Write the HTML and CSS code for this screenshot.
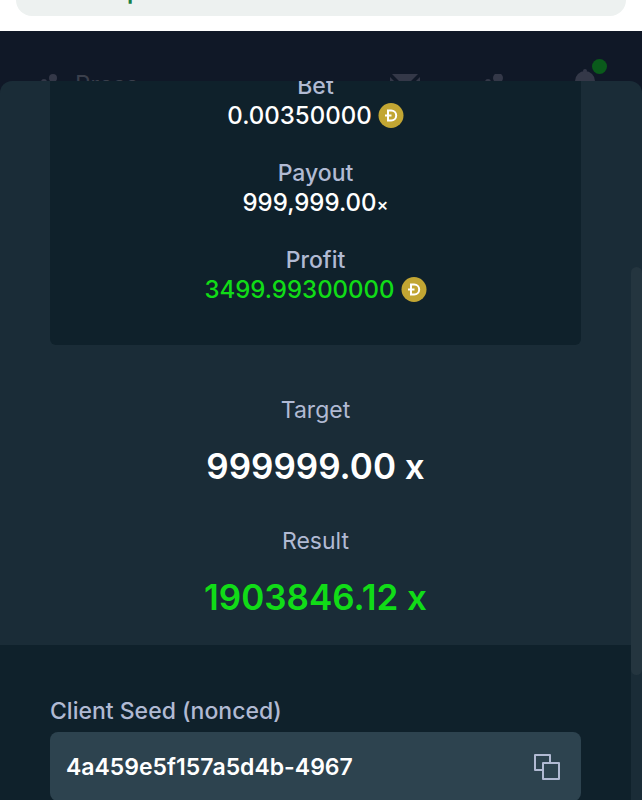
FILE: index.html
```
<!DOCTYPE html>
<html lang="en">
<head>
    <meta charset="UTF-8">
    <meta name="viewport" content="width=device-width, initial-scale=1.0">
    <title>Bet</title>
    <link rel="stylesheet" href="styles.css">
</head>
<body>
    <div class="browser-bar">
        <div class="address"><span class="address-text">p</span></div>
    </div>

    <nav class="navbar">
        <div class="nav-user">
            <svg width="26" height="22" viewBox="0 0 26 22"><circle cx="3" cy="8" r="3"/><circle cx="12" cy="4" r="4"/><path d="M3 22c0-9 4-12 9-12s9 3 9 12z"/></svg>
            <span>Press</span>
        </div>
        <div class="nav-icons">
            <svg width="30" height="22" viewBox="0 0 30 22"><path d="M2 0h26L15 13zM0 3l9 9-9 9zM30 3l-9 9 9 9z"/></svg>
            <svg width="26" height="22" viewBox="0 0 26 22"><circle cx="4" cy="8" r="3"/><circle cx="14" cy="4" r="5"/><path d="M4 22c0-9 4-12 10-12s9 3 9 12z"/></svg>
            <div class="bell">
                <svg width="22" height="26" viewBox="0 0 22 26"><circle cx="11" cy="3" r="2"/><path d="M1 20v-7a10 10 0 0 1 20 0v7z"/></svg>
                <span class="bell-dot"></span>
            </div>
        </div>
    </nav>

    <main class="modal">
        <div class="modal-content">
            <div class="panel">
                <div class="stat">
                    <h2>Bet</h2>
                    <p>0.00350000
                        <svg class="coin" viewBox="0 0 26 26"><circle cx="13" cy="12.5" r="12.5" fill="#c2a633"/><path d="M10 7.5h3.2a5 5 0 0 1 0 10H10zM7 12.5h6.5" fill="none" stroke="#fff" stroke-width="2"/></svg>
                    </p>
                </div>
                <div class="stat">
                    <h2>Payout</h2>
                    <p><span>999,999.00<span class="times">×</span></span></p>
                </div>
                <div class="stat">
                    <h2>Profit</h2>
                    <p class="win">3499.99300000
                        <svg class="coin" viewBox="0 0 26 26"><circle cx="13" cy="12.5" r="12.5" fill="#c2a633"/><path d="M10 7.5h3.2a5 5 0 0 1 0 10H10zM7 12.5h6.5" fill="none" stroke="#fff" stroke-width="2"/></svg>
                    </p>
                </div>
            </div>

            <div class="results">
                <div class="result">
                    <h3>Target</h3>
                    <p>999999.00 x</p>
                </div>
                <div class="result">
                    <h3>Result</h3>
                    <p class="win">1903846.12 x</p>
                </div>
            </div>

            <div class="seeds">
                <label for="client-seed">Client Seed (nonced)</label>
                <div class="seed-box">
                    <input id="client-seed" type="text" value="4a459e5f157a5d4b-4967" readonly>
                    <button type="button" aria-label="Copy">
                        <svg width="26" height="26" viewBox="0 0 26 26" fill="none" stroke="#b1bad3" stroke-width="2" stroke-linejoin="round"><path d="M8.5 16H1V1h15v7.5"/><rect x="9" y="9" width="16" height="16"/></svg>
                    </button>
                </div>
            </div>
        </div>
        <div class="scrollbar"><div class="thumb"></div></div>
    </main>
</body>
</html>
```

FILE: styles.css
```
:root {
    --nav: #101827;
    --modal: #1a2c37;
    --panel: #0f212b;
    --field: #2d434f;
    --label: #b1bad3;
    --win: #11dc17;
}

* {
    box-sizing: border-box;
    margin: 0;
    padding: 0;
    font-family: Inter, "Liberation Sans", sans-serif;
}

body {
    height: 100vh;
    display: flex;
    flex-direction: column;
    overflow: hidden;
    background-color: var(--nav);
    color: white;
}

.browser-bar {
    display: flex;
    flex: none;
    height: 31px;
    padding: 0 16px 15px;
    background-color: white;
}

.address {
    display: flex;
    flex: 1;
    align-items: flex-end;
    padding: 0 111px 13px;
    overflow: hidden;
    border-radius: 0 0 32px 32px;
    background-color: #edf1f0;
}

.address-text {
    color: #188048;
    font-size: 24px;
    font-weight: 600;
    line-height: 24px;
}

.navbar {
    display: flex;
    flex: none;
    justify-content: space-between;
    height: 50px;
    padding: 43px 46px 0 41px;
    overflow: hidden;
    color: #3a3f4c;
}

.navbar svg {
    display: block;
    fill: #343848;
}

.nav-user {
    display: flex;
    gap: 8px;
    height: 22px;
    font-size: 24px;
    line-height: 22px;
}

.nav-icons {
    display: flex;
    gap: 64px;
    height: 22px;
}

.bell {
    position: relative;
    margin-top: -6px;
}

.bell-dot {
    position: absolute;
    top: -9px;
    right: -11px;
    width: 15px;
    height: 15px;
    border-radius: 50%;
    background-color: #0a5a1b;
}

.modal {
    display: flex;
    flex: 1;
    min-height: 0;
    overflow: hidden;
    border-radius: 12px 12px 0 0;
    background-color: var(--modal);
}

.modal-content {
    flex: 1;
    text-align: center;
}

.panel {
    display: flex;
    flex-direction: column;
    gap: 29px;
    margin: -9px 50px 0;
    padding-bottom: 41px;
    border-radius: 6px;
    background-color: var(--panel);
}

.stat h2,
.stat p {
    font-weight: 500;
    line-height: 29px;
}

.stat h2 {
    color: var(--label);
    font-size: 23px;
}

.stat p {
    display: flex;
    align-items: center;
    justify-content: center;
    gap: 6px;
    font-size: 24px;
}

.times {
    font-size: 18px;
    line-height: 18px;
}

.stat .win,
.results .win {
    color: var(--win);
}

.coin {
    width: 26px;
    height: 26px;
}

.results {
    display: flex;
    flex-direction: column;
    gap: 35px;
    padding: 49px 50px 24px;
}

.result h3 {
    margin-bottom: 16px;
    color: var(--label);
    font-size: 23px;
    font-weight: 400;
    line-height: 32px;
}

.result p {
    font-size: 35px;
    font-weight: 600;
    line-height: 48px;
}

.seeds {
    padding: 50px;
    text-align: left;
    background-color: var(--panel);
}

.seeds label {
    display: block;
    margin-bottom: 5px;
    color: var(--label);
    font-size: 23px;
    font-weight: 500;
    line-height: 32px;
}

.seed-box {
    display: flex;
    align-items: center;
    height: 69px;
    padding: 0 21px 0 16px;
    border-radius: 8px;
    background-color: var(--field);
}

.seed-box input {
    flex: 1;
    min-width: 0;
    border: none;
    outline: none;
    background: none;
    color: white;
    font-size: 23px;
    font-weight: 600;
}

.seed-box button {
    border: none;
    background: none;
    cursor: pointer;
}

.seed-box svg {
    display: block;
}

.scrollbar {
    width: 11px;
    padding-top: 186px;
}

.thumb {
    height: 408px;
    border-radius: 6px;
    background-color: #24353f;
}
```
